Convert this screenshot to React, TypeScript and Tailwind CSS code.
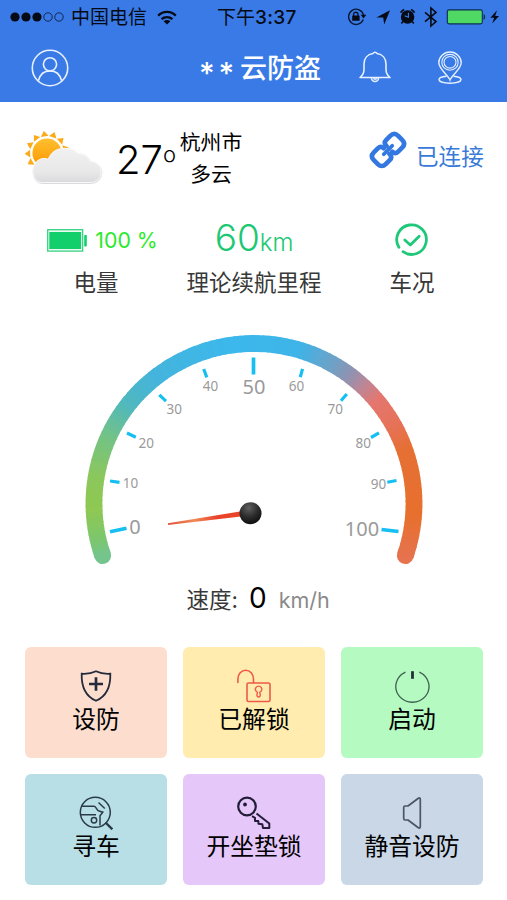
import type { ReactNode } from "react";

const CJK = "font-['Inter','Noto_Sans_CJK_SC',sans-serif]";

/* ---------- status bar ---------- */

function Signal() {
  return (
    <svg className="h-[10px] w-[54px]" viewBox="0 0 54 10">
      {[5, 16, 27].map((x) => (
        <circle key={x} cx={x} cy="5" r="4.6" fill="#050a14" />
      ))}
      {[38, 49].map((x) => (
        <circle key={x} cx={x} cy="5" r="4.2" fill="none" stroke="#0d1f40" strokeWidth="0.9" />
      ))}
    </svg>
  );
}

function Wifi() {
  return (
    <svg className="h-[15px] w-[20px]" viewBox="0 0 20 15" fill="none" stroke="#050a14" strokeWidth="2.3">
      <path d="M1.2 5.6C6.2 .6 13.8 .6 18.8 5.6" />
      <path d="M4.6 9.2C7.6 6.3 12.4 6.3 15.4 9.2" />
      <path d="M10 14.6 6.6 11.3C8.5 9.6 11.5 9.6 13.4 11.3Z" fill="#050a14" stroke="none" />
    </svg>
  );
}

function StatusIcons() {
  return (
    <svg className="h-[24px] w-[156px]" viewBox="345 5 156 24">
      <g fill="none" stroke="#081630" strokeWidth="1.3">
        <path d="M363.3 19.5A7.6 7.6 0 1 1 363.6 15.2" />
        <path d="M353.6 16v-1.6a2.2 2.2 0 0 1 4.4 0V16" strokeWidth="1.4" />
      </g>
      <path d="M360.7 14.8h5.6l-2.8 3.6Z" fill="#050a14" />
      <rect x="352.2" y="15.4" width="7.4" height="5.4" rx=".6" fill="#050a14" />
      <path d="M390 10.2 376.4 17.4H383.2L384.2 24.4Z" fill="#050a14" />
      <circle cx="407.6" cy="17" r="6.7" fill="#050a14" />
      <path d="M400.6 12.6a9 9 0 0 1 3.6-3.2M411 9.4a9 9 0 0 1 3.6 3.2" fill="none" stroke="#050a14" strokeWidth="1.7" />
      <path d="M403 21.4l-1.6 2M412.2 21.4l1.6 2" stroke="#050a14" strokeWidth="1.6" />
      <path d="M408.4 12.8V17.3L404.6 15.8" fill="none" stroke="#3d7ce8" strokeWidth="1.1" />
      <path d="M425 12.4 436 21.6 430.9 26V8L436 12.4 425 21.6" fill="none" stroke="#050a14" strokeWidth="1.6" />
      <rect x="447.3" y="9.9" width="35" height="14" rx="1.8" fill="#4fd964" stroke="#0c2c55" strokeWidth="1.1" />
      <path d="M483.6 14c2 .6 2 5.400 0 6Z" fill="#0c2c55" />
      <path d="M497 10.300 490.400 17.800H494.200L492.200 23.600 499 16H495.200Z" fill="#050a14" />
    </svg>
  );
}

/* ---------- navigation icons ---------- */

function UserIcon() {
  return (
    <svg className="size-[38px]" viewBox="0 0 38 38" fill="none" stroke="#e6f0ff" strokeWidth="1.6">
      <circle cx="19" cy="19" r="17.700" />
      <circle cx="19" cy="15.300" r="6.600" />
      <path d="M7.300 31.800C9 25.500 13 21.900 19 21.900S29 25.500 30.700 31.800" />
    </svg>
  );
}

function BellIcon() {
  return (
    <svg className="mb-[2px] h-[34px] w-[32px]" viewBox="0 0 32 34" fill="none" stroke="#e6f0ff" strokeWidth="1.6" strokeLinejoin="round">
      <path d="M14 3.500a2.200 2.200 0 0 1 4 0C23.500 4.400 27 8.500 27 14v5.500c0 4 1.500 6 4 8H1c2.500-2 4-4 4-8V14C5 8.500 8.500 4.400 14 3.500Z" />
      <path d="M12.500 28a3.500 3.500 0 0 0 7 0M14.800 28a1.300 1.300 0 0 0 2.600 0" />
    </svg>
  );
}

function PinIcon() {
  return (
    <svg className="h-[34px] w-[26px]" viewBox="0 0 26 34" fill="none" stroke="#e6f0ff" strokeWidth="1.400">
      <path d="M13 29C11.500 24.500 1.800 18 1.800 11.800a11.200 10.800 0 0 1 22.400 0C24.200 18 14.500 24.500 13 29Z" />
      <ellipse cx="13" cy="11.300" rx="8.200" ry="7.900" strokeWidth="1.100" />
      <ellipse cx="13" cy="11.300" rx="6" ry="5.800" strokeWidth="1.100" />
      <path d="M9.500 25.300C5 25.700 2 26.900 2 28.500 2 30.700 7 32.200 13 32.200s11-1.500 11-3.700c0-1.600-3-2.800-7.500-3.200" />
    </svg>
  );
}

/* ---------- weather ---------- */

function WeatherIcon() {
  const rays = [150, 178, 206, 234, 262, 290, 318, 346];
  return (
    <svg className="h-[56px] w-[82px]" viewBox="0 0 82 56">
      <defs>
        <linearGradient id="cloud" x1="0" y1="0" x2="0" y2="1">
          <stop offset="0" stopColor="#f1f1f2" />
          <stop offset=".7" stopColor="#e8e8e9" />
          <stop offset="1" stopColor="#dadadc" />
        </linearGradient>
        <linearGradient id="sun" x1="0" y1="0" x2="0" y2="1">
          <stop offset="0" stopColor="#ffc02f" />
          <stop offset="1" stopColor="#fb9500" />
        </linearGradient>
        <filter id="shade" x="-10%" y="-10%" width="120%" height="130%">
          <feDropShadow dx=".4" dy=".7" stdDeviation=".6" floodColor="#999" floodOpacity=".5" />
        </filter>
      </defs>
      {rays.map((a) => (
        <path key={a} d="M16.800-3.900 22.300 0 16.800 3.900Z" fill="#fbab18" transform={`translate(24 22) rotate(${a})`} />
      ))}
      <circle cx="24" cy="22" r="14.600" fill="url(#sun)" />
      <path
        d="M20 51.500C13.500 51.500 10 47 10 40c0-7.500 5-12.500 11-12.500 1.500 0 3 .2 4.300.7C28 21 34 17.300 41.500 17.300c6 0 10.500 2 13 5.200 7 .2 10.500 2.800 12.100 7.700 6 .5 11.400 4.500 11.400 10 0 7-4.500 11.300-11 11.300Z"
        fill="url(#cloud)"
        stroke="#f8f8f8"
        strokeWidth="1"
        filter="url(#shade)"
      />
    </svg>
  );
}

function ChainIcon() {
  return (
    <svg className="size-[40px]" viewBox="0 0 40 40" fill="none" stroke="#3377e0" strokeWidth="4.600" strokeLinecap="round">
      <g transform="rotate(-45 20 20)">
        <path d="M22.600 16.200V15.800c0-2.700 1.500-4.200 4.200-4.200h5.600c3.600 0 5.600 2 5.600 5.600v5.600c0 3.600-2 5.600-5.600 5.600h-5.600c-2.700 0-4.200-1.500-4.200-4.200" transform="translate(-.8 0)" />
        <path d="M17.400 23.800v.4c0 2.700-1.500 4.200-4.200 4.200H7.600C4 28.400 2 26.400 2 22.800v-5.600c0-3.600 2-5.600 5.600-5.600h5.600c2.700 0 4.200 1.500 4.200 4.200" transform="translate(.8 0)" />
        <path d="M14 20h12" strokeWidth="3.800" />
      </g>
    </svg>
  );
}

/* ---------- stats ---------- */

function BatteryIcon() {
  return (
    <svg className="h-[23px] w-[40px]" viewBox="0 0 40 23">
      <rect x=".7" y=".7" width="35" height="21.400" fill="#e9fbf1" stroke="#2bcf7b" strokeWidth="1.200" />
      <rect x="2.300" y="3" width="31.800" height="17" fill="#12ce6b" />
      <rect x="37.200" y="6" width="2.600" height="11.500" rx=".8" fill="#12ce6b" />
    </svg>
  );
}

function CheckIcon() {
  return (
    <svg className="mt-[2px] size-[34px]" viewBox="0 0 34 34" fill="none" stroke="#1ec878" strokeWidth="2.800" strokeLinecap="round" strokeLinejoin="round">
      <path d="M3.900 24.300A14.800 14.800 0 1 1 8 28.700" />
      <path d="M9.800 17 15.300 22 24.200 13.200" />
    </svg>
  );
}

function Stat({ label, children }: { label: string; children: ReactNode }) {
  return (
    <div className="flex flex-col items-center">
      <div className="flex h-[40px] items-center justify-center">{children}</div>
      <div className="mt-[12px] text-[22.500px] leading-[24px] whitespace-nowrap text-[#383838]">{label}</div>
    </div>
  );
}

/* ---------- speedometer ---------- */

type RGB = [number, number, number];

/* Colour stops by angle, clockwise in degrees from the positive x axis. */
const STOPS: [number, RGB][] = [
  [161, [116, 196, 142]],
  [167, [124, 198, 110]],
  [178, [143, 200, 82]],
  [190, [138, 199, 92]],
  [205, [114, 195, 136]],
  [218, [80, 184, 190]],
  [232, [68, 180, 220]],
  [262, [60, 184, 236]],
  [286, [62, 180, 232]],
  [300, [112, 160, 197]],
  [307, [146, 146, 176]],
  [313, [190, 134, 150]],
  [320, [228, 118, 110]],
  [331, [230, 114, 88]],
  [340, [230, 112, 52]],
  [365, [231, 112, 46]],
  [379, [230, 114, 78]],
];

function colourAt(angle: number) {
  let i = 0;
  while (i < STOPS.length - 2 && angle > STOPS[i + 1][0]) i++;
  const [a0, c0] = STOPS[i];
  const [a1, c1] = STOPS[i + 1];
  const t = Math.min(1, Math.max(0, (angle - a0) / (a1 - a0)));
  return `rgb(${c0.map((v, k) => Math.round(v + (c1[k] - v) * t)).join(",")})`;
}

const CX = 254;
const CY = 503.5;
const R = 160;
const START = 161;
const END = 379;

function point(angle: number) {
  const a = (angle * Math.PI) / 180;
  return `${(CX + R * Math.cos(a)).toFixed(2)} ${(CY + R * Math.sin(a)).toFixed(2)}`;
}

const SEGMENTS = Array.from({ length: (END - START) / 2 }, (_, i) => START + i * 2);

const TICKS: { v: number; line: [number, number, number, number]; at: [number, number]; big?: boolean }[] = [
  { v: 0, line: [110, 531.800, 126.500, 528.300], at: [135, 534], big: true },
  { v: 10, line: [110, 481, 119.500, 482.300], at: [130.500, 488] },
  { v: 20, line: [127, 433, 135.800, 437.300], at: [146.300, 447.500] },
  { v: 30, line: [159.300, 394.800, 166, 401.200], at: [174.300, 413.500] },
  { v: 40, line: [203.700, 369, 206.800, 377.400], at: [210.500, 390.700] },
  { v: 50, line: [253.500, 357.500, 253.500, 374.500], at: [254, 393.500], big: true },
  { v: 60, line: [302.500, 368.800, 300.300, 377.200], at: [296.500, 390.700] },
  { v: 70, line: [346.800, 394, 341, 400.800], at: [335.200, 414] },
  { v: 80, line: [379, 432.800, 371, 437.500], at: [363.200, 447.500] },
  { v: 90, line: [396.500, 480.500, 387.300, 482.200], at: [378.500, 488.500] },
  { v: 100, line: [381.500, 529.500, 398.500, 531.500], at: [362, 536], big: true },
];

function Gauge() {
  return (
    <svg className="h-[242px] w-[350px]" viewBox="79 330 350 242">
      <defs>
        <linearGradient id="needle" gradientUnits="userSpaceOnUse" x1="168" y1="0" x2="243" y2="0">
          <stop offset="0" stopColor="#e0503a" />
          <stop offset=".35" stopColor="#f28a55" />
          <stop offset=".65" stopColor="#e8432a" />
          <stop offset="1" stopColor="#ea4427" />
        </linearGradient>
        <radialGradient id="hub" cx=".42" cy=".25" r=".8">
          <stop offset="0" stopColor="#606060" />
          <stop offset=".55" stopColor="#2a2a2a" />
          <stop offset="1" stopColor="#0b0b0b" />
        </radialGradient>
      </defs>
      <g fill="none" strokeWidth="16.800">
        <path d={`M${point(START)}A${R} ${R} 0 0 1 ${point(START + 1)}`} stroke={colourAt(START)} strokeLinecap="round" />
        <path d={`M${point(END - 1)}A${R} ${R} 0 0 1 ${point(END)}`} stroke={colourAt(END)} strokeLinecap="round" />
        {SEGMENTS.map((a) => (
          <path key={a} d={`M${point(a)}A${R} ${R} 0 0 1 ${point(Math.min(END, a + 2.400))}`} stroke={colourAt(a + 1)} />
        ))}
      </g>
      {TICKS.map(({ v, line: [x1, y1, x2, y2], at: [x, y], big }) => (
        <g key={v}>
          <line x1={x1} y1={y1} x2={x2} y2={y2} stroke="#15bff2" strokeWidth={big ? 3.700 : 3.200} />
          <text
            x={x}
            y={y}
            textAnchor="middle"
            fill="#9a9a9a"
            className={big ? "font-['Noto_Sans',sans-serif] text-[20px]" : "font-['Noto_Sans',sans-serif] text-[13.500px]"}
          >
            {v}
          </text>
        </g>
      ))}
      <path d="M168 523.200 243 511V516.200L168 525Z" fill="url(#needle)" />
      <circle cx="250.500" cy="513.300" r="11" fill="url(#hub)" />
    </svg>
  );
}

/* ---------- action icons ---------- */

function ShieldIcon() {
  return (
    <svg className="size-[34px]" viewBox="0 0 34 34" fill="none" stroke="#252b3c" strokeWidth="1.800">
      <path d="M17 2.200C12.500 4.500 7.500 5 2.700 4.700 2.300 18 6 27 17 31.800 28 27 31.700 18 31.300 4.700 26.500 5 21.500 4.500 17 2.200Z" />
      <path d="M17 8.300v13.400M10 15h14" strokeWidth="2.700" />
    </svg>
  );
}

function UnlockIcon() {
  return (
    <svg className="size-[34px]" viewBox="0 0 34 34" fill="none" stroke="#ee5a45" strokeWidth="1.600" strokeLinecap="round">
      <path d="M.9 13.500V10a7.700 8.700 0 0 1 15.600 0v3.800" />
      <rect x="10" y="14" width="23" height="18.500" rx="1.500" />
      <path d="M19.900 26.600l.5-3.300a3.200 3.200 0 1 1 2.400 0l.5 3.300a1.750 1.750 0 0 1-3.400 0Z" strokeWidth="1.400" />
    </svg>
  );
}

function PowerIcon() {
  return (
    <svg className="size-[36px]" viewBox="0 0 36 36" fill="none" stroke="#3e5f50" strokeWidth="1.300" strokeLinecap="round">
      <path d="M11 4.300A16.600 15.800 0 1 0 25.800 4.300" />
      <path d="M18.500 3.200v7.600" stroke="#22303a" strokeWidth="2.800" strokeLinecap="butt" />
    </svg>
  );
}

function FindCarIcon() {
  return (
    <svg className="size-[34px]" viewBox="0 0 34 34" fill="none" stroke="#2b3a4a" strokeWidth="1.500">
      <circle cx="16.300" cy="16.300" r="15" />
      <path d="M3 10.300H15C17.500 10.300 17.500 14.500 20 15L23.800 16.200 21 19.800V29.500M1.500 18.800H17" />
      <circle cx="15" cy="24.300" r="2.700" />
      <path d="M19.500 6.500 25.800 12.500" />
      <path d="M26.500 26.500 33.300 33.300" strokeWidth="2.400" />
    </svg>
  );
}

function KeyIcon() {
  return (
    <svg className="size-[34px]" viewBox="0 0 34 34" fill="none" stroke="#231d3a" strokeWidth="2" strokeLinejoin="round">
      <circle cx="10" cy="10.500" r="8.800" strokeWidth="2.200" />
      <circle cx="8" cy="8.500" r="1.900" fill="#231d3a" stroke="none" />
      <path d="M19.500 17.500 32.300 27.500V32H26L25.300 28.300 21.500 27.800 21.300 25H18V21.800L15 20.200" />
    </svg>
  );
}

function SpeakerIcon() {
  return (
    <svg className="size-[34px]" viewBox="0 0 34 34" fill="none" stroke="#4b5563" strokeWidth="1.700" strokeLinejoin="round">
      <path d="M8.700 11.500Q8.700 10 10.200 10H13L23 2.500Q25.300 1 25.300 3.500V30.500Q25.300 33 23 31.500L13 24H10.200Q8.700 24 8.700 22.500Z" />
    </svg>
  );
}

const ACTIONS: { label: string; bg: string; icon: ReactNode }[] = [
  { label: "设防", bg: "bg-[#fddece]", icon: <ShieldIcon /> },
  { label: "已解锁", bg: "bg-[#ffecae]", icon: <UnlockIcon /> },
  { label: "启动", bg: "bg-[#b5fac1]", icon: <PowerIcon /> },
  { label: "寻车", bg: "bg-[#b9dfe6]", icon: <FindCarIcon /> },
  { label: "开坐垫锁", bg: "bg-[#e5c8f9]", icon: <KeyIcon /> },
  { label: "静音设防", bg: "bg-[#cad7e7]", icon: <SpeakerIcon /> },
];

export default function App() {
  return (
    <div className={`flex h-[900px] w-[507px] flex-col overflow-hidden bg-white text-black ${CJK}`}>
      <header className="h-[102px] shrink-0 bg-[#397ae7]">
        <div className="grid h-[34px] grid-cols-[217px_128px_1fr] items-center">
          <div className="flex items-center pl-[10px]">
            <Signal />
            <span className="mt-[2px] ml-[7px] text-[19px] leading-[24px] whitespace-nowrap text-[#050a14]">中国电信</span>
            <span className="ml-[10px]">
              <Wifi />
            </span>
          </div>
          <span className="mt-[2px] text-[19px] leading-[24px] whitespace-nowrap text-[#050a14]">
            下午<span className="font-medium tracking-[0.300px]">3:37</span>
          </span>
          <StatusIcons />
        </div>
        <div className="flex h-[68px] items-center pl-[31px]">
          <UserIcon />
          <h1 className="mt-[2px] ml-[130px] flex w-[160px] items-center text-[27px] leading-[32px] font-medium whitespace-nowrap text-white">
            <span className="w-[41px] pt-[7px] text-[30px] tracking-[4px]">**</span>
            <span>云防盗</span>
          </h1>
          <BellIcon />
          <span className="ml-[46px]">
            <PinIcon />
          </span>
        </div>
      </header>

      <section className="flex h-[110px] shrink-0 items-center pt-[4px] pl-[23px]">
        <WeatherIcon />
        <div className="ml-[11px] flex w-[64px] items-start">
          <span className="w-[47px] pt-[1px] text-[40px] leading-[44px] font-light">27</span>
          <span className="text-[22px] leading-[34px] font-light">o</span>
        </div>
        <div className="flex w-[62px] flex-col items-center text-[20.800px] leading-[32px] whitespace-nowrap">
          <span>杭州市</span>
          <span>多云</span>
        </div>
        <span className="-mt-[18px] ml-[126px]">
          <ChainIcon />
        </span>
        <span className="-mt-[4px] ml-[8px] text-[22.600px] leading-[24px] whitespace-nowrap text-[#397ad8]">已连接</span>
      </section>

      <section className="grid h-[118px] shrink-0 grid-cols-3 gap-x-[16px] pt-[7px] pr-[24px] pl-[25px]">
        <Stat label="电量">
          <div className="mt-[2px] flex items-center gap-[8px] pl-[13px]">
            <BatteryIcon />
            <span className="text-[21.300px] leading-[24px] whitespace-nowrap text-[#2bea2b]">100 %</span>
          </div>
        </Stat>
        <Stat label="理论续航里程">
          <div className="flex items-baseline text-[#1cc874]">
            <span className="text-[37px] leading-[40px] font-light">60</span>
            <span className="text-[24px] font-light">km</span>
          </div>
        </Stat>
        <Stat label="车况">
          <CheckIcon />
        </Stat>
      </section>

      <section className="flex h-[317px] shrink-0 flex-col items-center">
        <Gauge />
        <div className="mt-[11px] flex w-[134px] items-baseline whitespace-nowrap">
          <span className="text-[22.500px] leading-[30px] text-[#383838]">速度:</span>
          <span className="ml-[11px] text-[28px] leading-[30px]">0</span>
          <span className="ml-[12px] text-[21.500px] leading-[30px] text-[#8a8a8a]">km/h</span>
        </div>
      </section>

      <section className="grid shrink-0 grid-cols-3 gap-x-[16px] gap-y-[16px] pr-[24px] pl-[25px]">
        {ACTIONS.map(({ label, bg, icon }) => (
          <button key={label} type="button" className={`flex h-[111px] flex-col items-center rounded-[6px] pt-[22px] ${bg}`}>
            <span className="flex h-[34px] items-center">{icon}</span>
            <span className="mt-[4px] text-[23.800px] leading-[26px] whitespace-nowrap">{label}</span>
          </button>
        ))}
      </section>
    </div>
  );
}
